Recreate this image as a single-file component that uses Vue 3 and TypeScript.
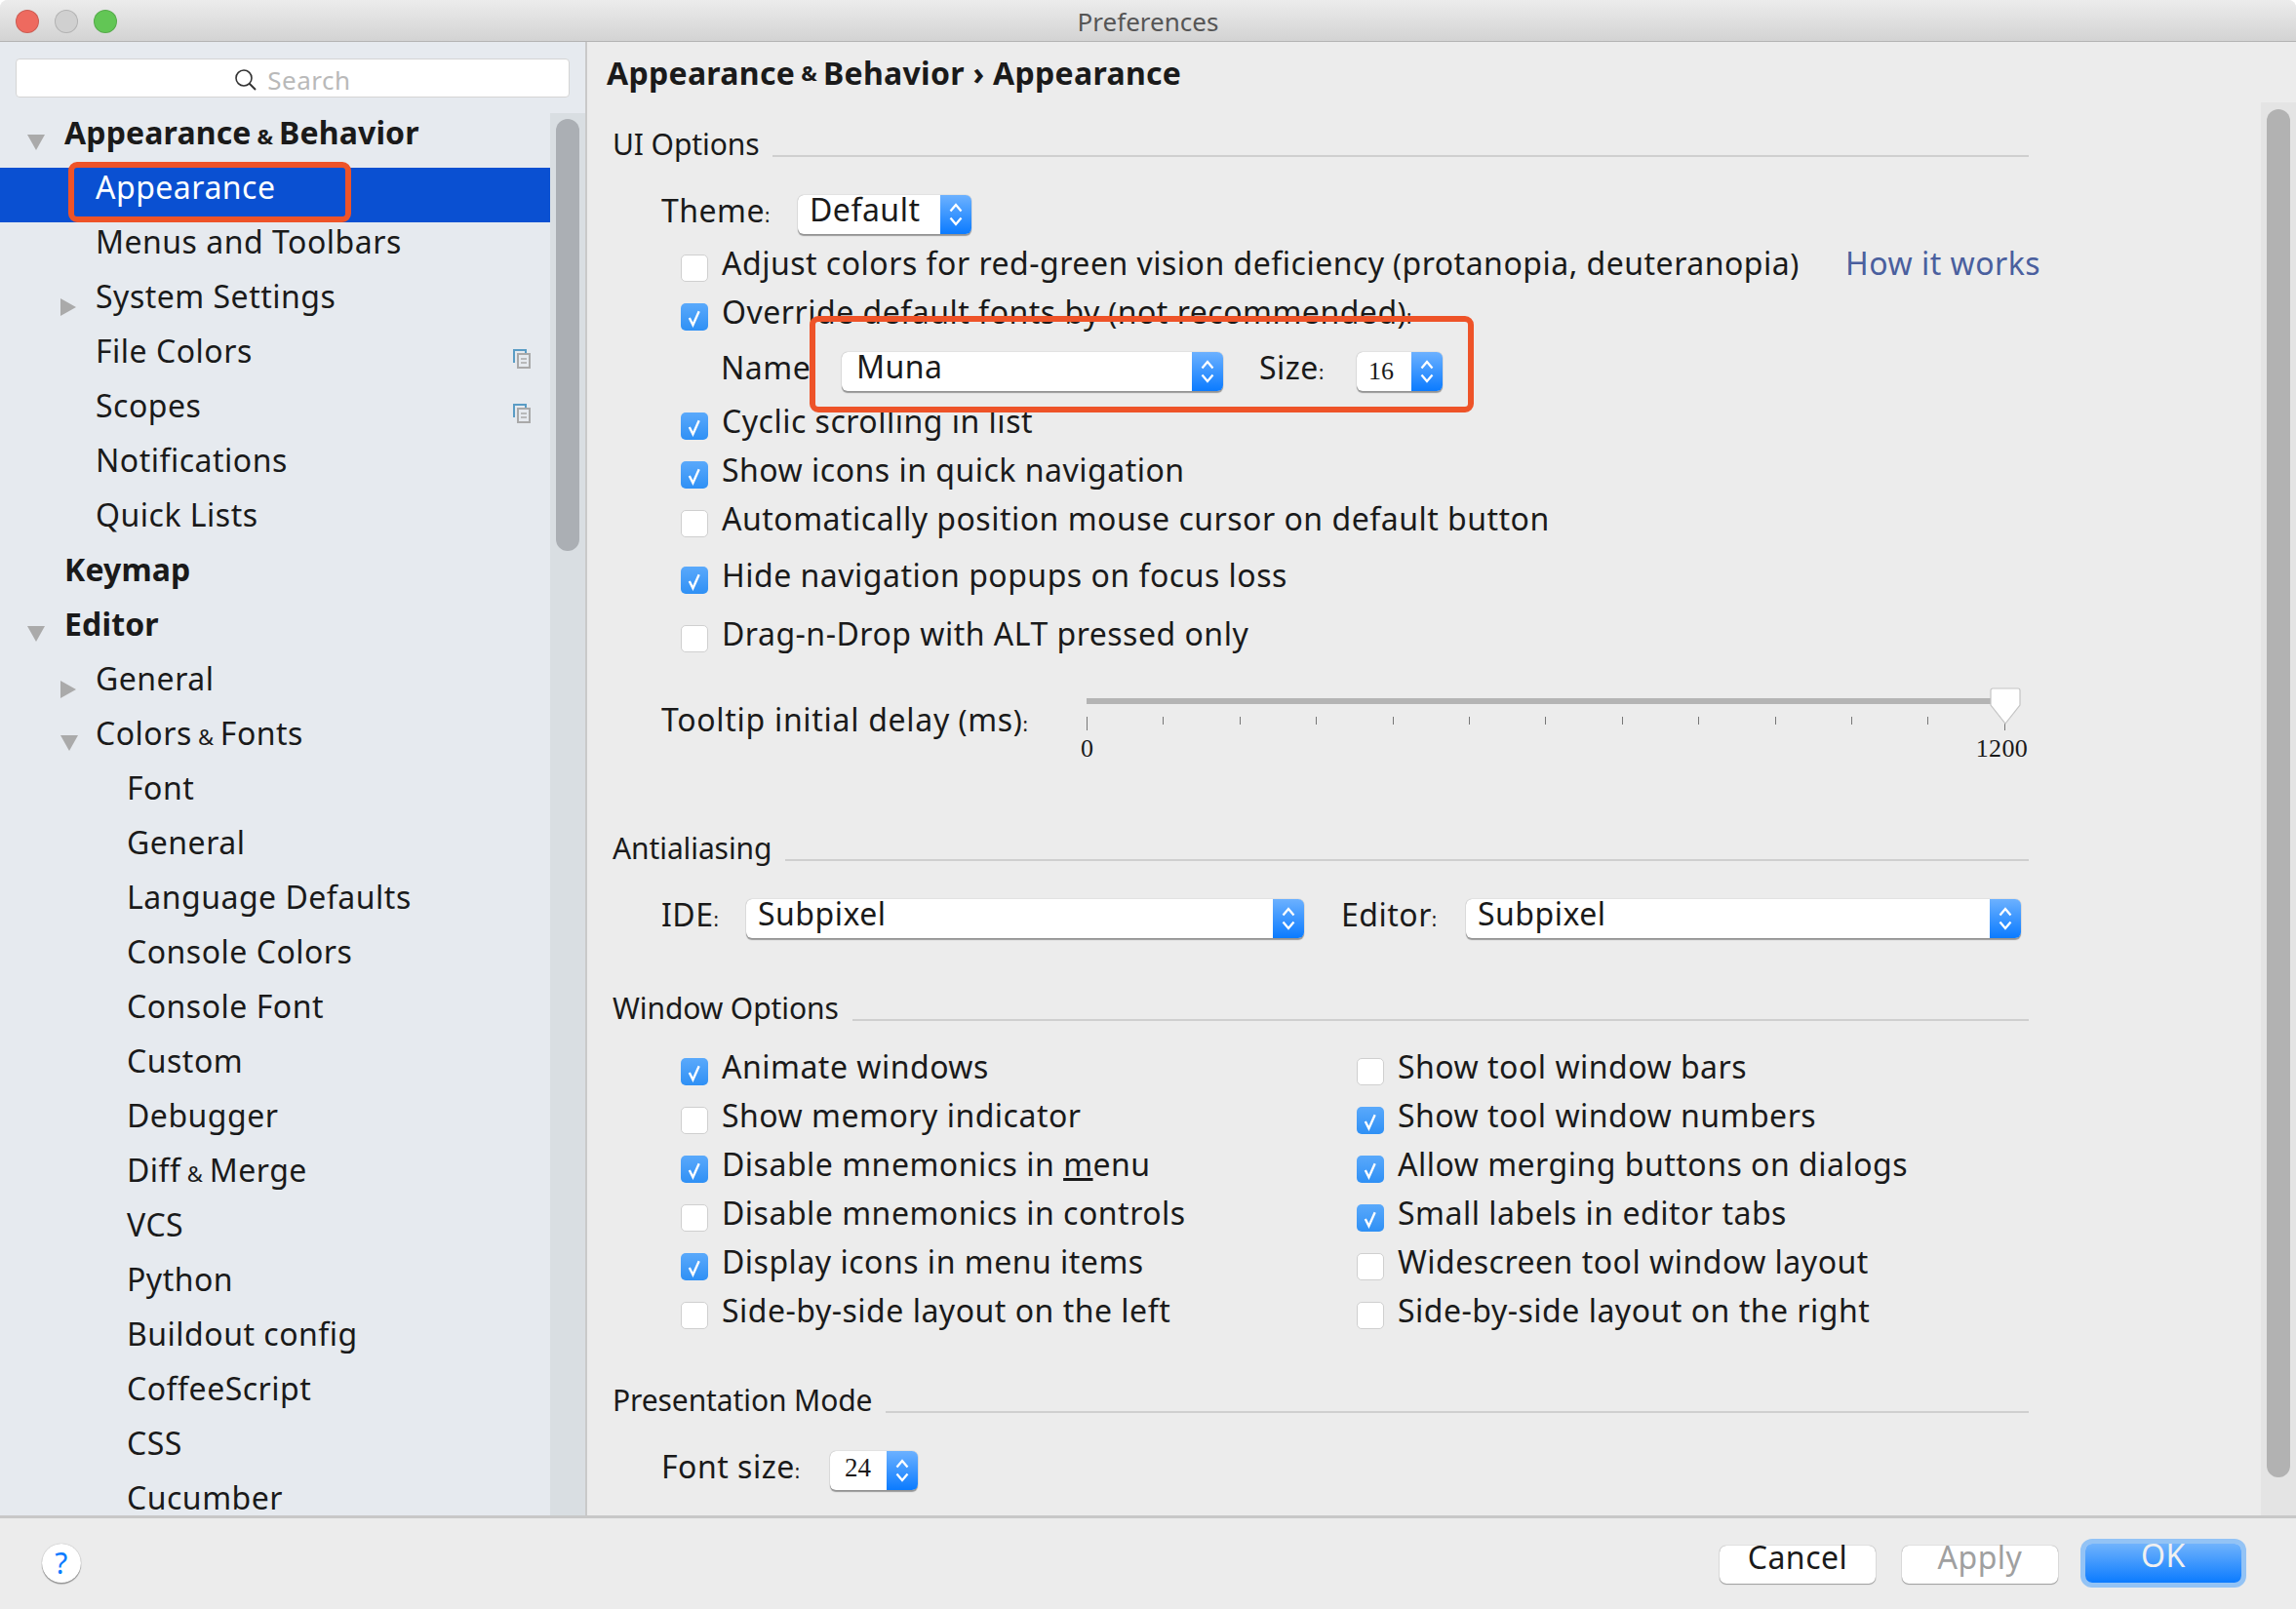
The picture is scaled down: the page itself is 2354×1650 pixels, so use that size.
<script setup lang="ts">
interface TreeItem {
  label: string;
  level: number;
  bold?: boolean;
  arrow?: "down" | "right";
  selected?: boolean;
  copy?: boolean;
  amp?: [string, string];
}

const tree: TreeItem[] = [
  { label: "", amp: ["Appearance", "Behavior"], level: 0, bold: true, arrow: "down" },
  { label: "Appearance", level: 1, selected: true },
  { label: "Menus and Toolbars", level: 1 },
  { label: "System Settings", level: 1, arrow: "right" },
  { label: "File Colors", level: 1, copy: true },
  { label: "Scopes", level: 1, copy: true },
  { label: "Notifications", level: 1 },
  { label: "Quick Lists", level: 1 },
  { label: "Keymap", level: 0, bold: true },
  { label: "Editor", level: 0, bold: true, arrow: "down" },
  { label: "General", level: 1, arrow: "right" },
  { label: "", amp: ["Colors", "Fonts"], level: 1, arrow: "down" },
  { label: "Font", level: 2 },
  { label: "General", level: 2 },
  { label: "Language Defaults", level: 2 },
  { label: "Console Colors", level: 2 },
  { label: "Console Font", level: 2 },
  { label: "Custom", level: 2 },
  { label: "Debugger", level: 2 },
  { label: "", amp: ["Diff", "Merge"], level: 2 },
  { label: "VCS", level: 2 },
  { label: "Python", level: 2 },
  { label: "Buildout config", level: 2 },
  { label: "CoffeeScript", level: 2 },
  { label: "CSS", level: 2 },
  { label: "Cucumber", level: 2 },
];

const windowLeft = [
  { label: "Animate windows", on: true },
  { label: "Show memory indicator", on: false },
  { label: "Disable mnemonics in ", under: "m", rest: "enu", on: true },
  { label: "Disable mnemonics in controls", on: false },
  { label: "Display icons in menu items", on: true },
  { label: "Side-by-side layout on the left", on: false },
];

const windowRight = [
  { label: "Show tool window bars", on: false },
  { label: "Show tool window numbers", on: true },
  { label: "Allow merging buttons on dialogs", on: true },
  { label: "Small labels in editor tabs", on: true },
  { label: "Widescreen tool window layout", on: false },
  { label: "Side-by-side layout on the right", on: false },
];

const windowOptions = windowLeft.flatMap((item, i) => [item, windowRight[i]]);

const ticks = Array.from({ length: 13 }, (_, i) => i);
</script>

<template>
  <div class="window">
    <svg class="defs" width="0" height="0">
      <symbol id="chev" viewBox="0 0 16 26">
        <path d="M2.500 9.500 8 3l5.500 6.500M2.500 16.500 8 23l5.500-6.500" fill="none" stroke="#fff" stroke-width="2.300" />
      </symbol>
      <symbol id="tick" viewBox="0 0 27 27">
        <path d="M8.500 14.500 12 21.500 18 8" fill="none" stroke="#fff" stroke-width="2.300" />
      </symbol>
    </svg>

    <header class="titlebar">
      <div class="lights">
        <span class="light red"></span>
        <span class="light grey"></span>
        <span class="light green"></span>
      </div>
      <span class="title">Preferences</span>
    </header>

    <div class="body">
      <aside class="sidebar">
        <div class="search">
          <svg class="search-icon" width="24" height="24" viewBox="0 0 24 24">
            <circle cx="10" cy="10" r="8" fill="none" stroke="#333" stroke-width="1.600" />
            <path d="M15.500 15.500 22 22" stroke="#333" stroke-width="2" />
          </svg>
          <span>Search</span>
        </div>
        <div class="tree-wrap">
          <ul class="tree">
            <li
              v-for="(item, i) in tree"
              :key="i"
              class="node"
              :class="['lvl' + item.level, { bold: item.bold, selected: item.selected }]"
            >
              <svg v-if="item.arrow === 'down'" class="arrow" width="18" height="16" viewBox="0 0 18 16">
                <path d="M0 0h18L9 16z" fill="#aaa" />
              </svg>
              <svg v-else-if="item.arrow === 'right'" class="arrow" width="16" height="18" viewBox="0 0 16 18">
                <path d="M0 0l16 9L0 18z" fill="#aaa" />
              </svg>
              <span v-if="item.amp">{{ item.amp[0] }}<span class="amp"> &amp; </span>{{ item.amp[1] }}</span>
              <span v-else>{{ item.label }}</span>
              <svg v-if="item.copy" class="copy" width="18" height="20" viewBox="0 0 18 20">
                <path d="M1 14V1h12v3" fill="none" stroke="#5a9cc5" stroke-width="2" />
                <rect x="5" y="5" width="12" height="14" fill="#e6eaef" stroke="#a9a9a9" stroke-width="2" />
                <path d="M8 10h6M8 14h6" stroke="#a9a9a9" stroke-width="1.500" />
              </svg>
            </li>
          </ul>
          <div class="side-track"><div class="side-thumb"></div></div>
        </div>
        <div class="mark mark-side"></div>
      </aside>

      <main class="main">
        <div class="crumb">Appearance<span class="amp"> &amp; </span>Behavior<span class="sep"> › </span>Appearance</div>
        <div class="scroller">
          <div class="content">
            <div class="section-title first"><span>UI Options</span><i></i></div>

            <div class="row theme-row">
              <span class="label theme-label">Theme<span class="colon">:</span></span>
              <div class="select theme-select"><span class="value">Default</span><span class="cap"><svg><use href="#chev" /></svg></span></div>
            </div>

            <div class="check">
              <span class="box"></span>
              <span>Adjust colors for red-green vision deficiency<span class="paren"> (</span>protanopia, deuteranopia<span class="paren">)</span></span>
              <a class="link">How it works</a>
            </div>
            <div class="check">
              <span class="box on"><svg><use href="#tick" /></svg></span>
              <span>Override default fonts by<span class="paren"> (</span>not recommended<span class="paren">)</span><span class="colon">:</span></span>
            </div>
            <div class="row name-row">
              <span class="name-label">Name<span class="colon">:</span></span>
              <div class="select name-select"><span class="value">Muna</span><span class="cap"><svg><use href="#chev" /></svg></span></div>
              <span class="size-label">Size<span class="colon">:</span></span>
              <div class="select num size-select"><span class="value">16</span><span class="cap"><svg><use href="#chev" /></svg></span></div>
            </div>
            <div class="check"><span class="box on"><svg><use href="#tick" /></svg></span><span>Cyclic scrolling in list</span></div>
            <div class="check"><span class="box on"><svg><use href="#tick" /></svg></span><span>Show icons in quick navigation</span></div>
            <div class="check"><span class="box"></span><span>Automatically position mouse cursor on default button</span></div>
            <div class="check hide-row"><span class="box on"><svg><use href="#tick" /></svg></span><span>Hide navigation popups on focus loss</span></div>
            <div class="check drag-row"><span class="box"></span><span>Drag-n-Drop with ALT pressed only</span></div>

            <div class="slider-row">
              <span class="slider-label">Tooltip initial delay<span class="paren"> (</span>ms<span class="paren">)</span><span class="colon">:</span></span>
              <div class="slider">
                <div class="track"></div>
                <div class="ticks">
                  <span v-for="t in ticks" :key="t" class="tick" :class="{ major: t === 0 || t === 12 }"></span>
                </div>
                <div class="scale"><span>0</span><span>1200</span></div>
                <svg class="thumb" width="32" height="38" viewBox="0 0 32 38">
                  <path d="M3 1h26a2 2 0 0 1 2 2v15L16 37 1 18V3a2 2 0 0 1 2-2z" fill="#fff" stroke="#c4c4c4" stroke-width="1.200" />
                </svg>
              </div>
            </div>

            <div class="section-title anti"><span>Antialiasing</span><i></i></div>
            <div class="row aa-row">
              <span class="label ide">IDE<span class="colon">:</span></span>
              <div class="select ide-select"><span class="value">Subpixel</span><span class="cap"><svg><use href="#chev" /></svg></span></div>
              <span class="editor-label">Editor<span class="colon">:</span></span>
              <div class="select editor-select"><span class="value">Subpixel</span><span class="cap"><svg><use href="#chev" /></svg></span></div>
            </div>

            <div class="section-title win"><span>Window Options</span><i></i></div>
            <div class="win-grid">
              <div v-for="opt in windowOptions" :key="opt.label" class="check">
                <span class="box" :class="{ on: opt.on }"><svg v-if="opt.on"><use href="#tick" /></svg></span>
                <span>{{ opt.label }}<template v-if="'under' in opt"><u>{{ opt.under }}</u>{{ opt.rest }}</template></span>
              </div>
            </div>

            <div class="section-title pres"><span>Presentation Mode</span><i></i></div>
            <div class="row font-row">
              <span class="label font-label">Font size<span class="colon">:</span></span>
              <div class="select num font-select"><span class="value">24</span><span class="cap"><svg><use href="#chev" /></svg></span></div>
            </div>
          </div>
          <div class="main-track"><div class="main-thumb"></div></div>
        </div>
        <div class="mark mark-main"></div>
      </main>
    </div>

    <footer class="footer">
      <button class="help">?</button>
      <div class="actions">
        <button class="btn">Cancel</button>
        <button class="btn disabled">Apply</button>
        <button class="btn ok">OK</button>
      </div>
    </footer>
  </div>
</template>

<style>
html,
body {
  margin: 0;
  background: #fff;
}
</style>

<style scoped>
.window {
  width: 2354px;
  height: 1650px;
  display: flex;
  flex-direction: column;
  overflow: hidden;
  background: #ececec;
  color: #1a1a1a;
  font-family: "Noto Sans", "Open Sans", sans-serif;
  font-size: 32px;
  letter-spacing: 0.5px;
  border-radius: 8px 8px 0 0;
}
.defs {
  position: absolute;
}
.titlebar {
  height: 43px;
  flex: none;
  display: flex;
  align-items: center;
  justify-content: center;
  position: relative;
  box-sizing: border-box;
  background: linear-gradient(#ececec, #d3d3d3);
  border-bottom: 1px solid #b4b4b4;
}
.lights {
  position: absolute;
  left: 16px;
  top: 10px;
  display: flex;
  gap: 16px;
}
.light {
  width: 24px;
  height: 24px;
  border-radius: 50%;
  box-sizing: border-box;
  border: 1px solid rgba(0, 0, 0, 0.14);
}
.red { background: #ee6a5f; }
.grey { background: #d0d0d0; }
.green { background: #62c655; }
.title {
  font-size: 26px;
  letter-spacing: 0;
  line-height: 36px;
  padding-top: 2px;
  color: #555;
}
.body {
  flex: 1;
  min-height: 0;
  display: flex;
}
.sidebar {
  width: 602px;
  flex: none;
  position: relative;
  display: flex;
  flex-direction: column;
  box-sizing: border-box;
  background: #e6eaef;
  border-right: 2px solid #c9c9c9;
}
.search {
  margin: 17px 16px 16px;
  height: 40px;
  flex: none;
  box-sizing: border-box;
  padding-top: 3px;
  display: flex;
  align-items: center;
  justify-content: center;
  gap: 10px;
  background: #fff;
  border: 1px solid #d4d4d4;
  border-radius: 4px;
  color: #b9b9b9;
  font-size: 26px;
  line-height: 34px;
}
.search-icon {
  flex: none;
}
.tree-wrap {
  flex: 1;
  min-height: 0;
  display: flex;
}
.tree {
  flex: 1;
  margin: 0;
  padding: 0;
  list-style: none;
}
.node {
  height: 56px;
  box-sizing: border-box;
  padding-bottom: 17px;
  line-height: 38px;
  display: flex;
  align-items: center;
  position: relative;
  white-space: nowrap;
}
.node:last-child {
  height: 39px;
  padding-bottom: 0;
}
.lvl0 { padding-left: 66px; }
.lvl1 { padding-left: 98px; }
.lvl2 { padding-left: 130px; }
.bold {
  font-weight: 700;
  letter-spacing: 0.15px;
}
.selected {
  background: #0a50d2;
  color: #fff;
}
.arrow {
  position: absolute;
  top: 22px;
}
.lvl0 .arrow { left: 28px; }
.lvl1 .arrow { left: 62px; }
.copy {
  position: absolute;
  left: 526px;
  top: 18px;
}
.amp {
  font-size: 22px;
  line-height: 0;
}
.side-track {
  width: 36px;
  flex: none;
  background: #d9dee2;
  padding: 6px 6px 0;
  box-sizing: border-box;
}
.side-thumb {
  height: 443px;
  background: #abafb4;
  border-radius: 12px;
}
.mark {
  position: absolute;
  box-sizing: border-box;
  border: 6px solid #ee5328;
  border-radius: 9px;
}
.mark-side {
  left: 70px;
  top: 123px;
  width: 290px;
  height: 62px;
}
.main {
  flex: 1;
  min-width: 0;
  position: relative;
  display: flex;
  flex-direction: column;
}
.crumb {
  height: 62px;
  flex: none;
  box-sizing: border-box;
  padding: 0 0 0 20px;
  font-weight: 700;
  letter-spacing: 0.3px;
  display: flex;
  align-items: center;
  white-space: pre;
}
.scroller {
  flex: 1;
  min-height: 0;
  display: flex;
}
.content {
  flex: 1;
  min-width: 0;
  padding: 0 238px 0 26px;
}
.main-track {
  width: 36px;
  flex: none;
  box-sizing: border-box;
  padding: 7px 6px 0;
  background: #e4e4e4;
}
.main-thumb {
  height: 1403px;
  background: #b2b2b2;
  border-radius: 12px;
}
.section-title {
  height: 40px;
  display: flex;
  gap: 14px;
  align-items: center;
  font-size: 30px;
  letter-spacing: -0.1px;
}
.section-title i {
  flex: 1;
  height: 2px;
  align-self: flex-end;
  margin-bottom: 6px;
  background: #cfcfcf;
}
.first { margin-top: 22px; }
.anti { margin-top: 64px; }
.win { margin-top: 51px; }
.pres { margin-top: 45px; }
.row {
  display: flex;
  position: relative;
}
.theme-row {
  margin-top: 33px;
  height: 40px;
  padding-left: 50px;
}
.label,
.name-label,
.size-label,
.editor-label {
  line-height: 31px;
  white-space: nowrap;
  flex: none;
}
.theme-label {
  width: 140px;
}
.colon {
  font-size: 20px;
}
.paren {
  font-size: 30px;
}
.select {
  height: 40px;
  flex: none;
  box-sizing: border-box;
  display: flex;
  justify-content: space-between;
  background: #fff;
  border-radius: 6px;
  box-shadow: 0 0 1px rgba(0, 0, 0, 0.4), 0 1.5px 1px rgba(0, 0, 0, 0.35);
}
.value {
  padding-left: 12px;
  line-height: 29px;
}
.num .value {
  font-family: "Liberation Serif", serif;
  font-size: 26px;
  letter-spacing: 0;
  line-height: 40px;
}
.name-select .value {
  padding-left: 15px;
}
.font-select .value {
  padding-left: 15px;
  font-size: 27px;
  line-height: 34px;
}
.cap {
  width: 32px;
  flex: none;
  display: flex;
  align-items: center;
  justify-content: center;
  border-radius: 0 6px 6px 0;
  background: linear-gradient(#6cb1ff, #0b7bff);
}
.cap svg {
  width: 16px;
  height: 26px;
}
.theme-select {
  width: 178px;
}
.check {
  height: 50px;
  display: flex;
  align-items: center;
  padding-left: 70px;
  white-space: nowrap;
}
.check > span:nth-child(2) {
  margin-left: 14px;
  margin-bottom: 3px;
}
.theme-row + .check {
  margin-top: 6px;
  position: relative;
}
.box {
  width: 28px;
  height: 28px;
  flex: none;
  margin-top: 7px;
  box-sizing: border-box;
  background: #fff;
  border: 1px solid #cfcfcf;
  border-radius: 5px;
}
.box.on {
  background: linear-gradient(#5aa9fb, #2f90f5);
  border: none;
}
.box svg {
  display: block;
  width: 28px;
  height: 28px;
}
.link {
  position: absolute;
  left: 1264px;
  margin-bottom: 3px;
  color: #4a5f9e;
}
.name-row {
  height: 62px;
  padding-left: 111px;
  padding-top: 15px;
  box-sizing: border-box;
}
.name-label {
  width: 124px;
}
.name-select {
  width: 391px;
}
.size-label {
  margin-left: 37px;
  width: 100px;
}
.size-select {
  width: 88px;
}
.hide-row {
  margin-top: 8px;
}
.drag-row {
  margin-top: 10px;
}
.slider-row {
  display: flex;
  margin-top: 29px;
  padding-left: 50px;
  height: 80px;
}
.slider-label {
  width: 436px;
  flex: none;
  padding-top: 11px;
  letter-spacing: 0.7px;
  white-space: nowrap;
}
.slider {
  width: 957px;
  flex: none;
  position: relative;
}
.track {
  width: 930px;
  height: 6px;
  margin-top: 11px;
  background: #b4b4b4;
}
.ticks {
  width: 942px;
  margin-top: 13px;
  display: flex;
  justify-content: space-between;
  height: 14px;
}
.tick {
  width: 1px;
  height: 8px;
  background: #777;
}
.tick.major {
  height: 14px;
}
.scale {
  width: 971px;
  margin: 4px 0 0 -6px;
  display: flex;
  justify-content: space-between;
  font-family: "Liberation Serif", serif;
  font-size: 26px;
  letter-spacing: 0.3px;
  line-height: 30px;
}
.thumb {
  position: absolute;
  left: 926px;
  top: 0;
}
.aa-row {
  margin-top: 33px;
  height: 40px;
}
.ide {
  margin-left: 50px;
  width: 87px;
}
.ide-select {
  width: 572px;
}
.editor-label {
  margin-left: 38px;
  width: 128px;
}
.editor-select {
  width: 569px;
}
.win-grid {
  margin-top: 17px;
  display: grid;
  grid-template-columns: 693px 1fr;
}
.font-row {
  margin-top: 33px;
  height: 40px;
  padding-left: 50px;
}
.font-label {
  width: 173px;
}
.font-select {
  width: 90px;
}
.mark-main {
  left: 228px;
  top: 281px;
  width: 681px;
  height: 99px;
}
.footer {
  height: 96px;
  flex: none;
  box-sizing: border-box;
  border-top: 3px solid #c8c8c8;
  display: flex;
  align-items: flex-start;
  justify-content: space-between;
  padding: 25px 56px 0 43px;
}
button {
  font: inherit;
  letter-spacing: inherit;
  padding: 0;
  border: none;
}
.help {
  width: 40px;
  height: 40px;
  margin-top: 1px;
  border-radius: 50%;
  background: #fff;
  color: #0b7bff;
  font-size: 30px;
  line-height: 38px;
  box-shadow: 0 0 1px rgba(0, 0, 0, 0.4), 0 1.5px 1px rgba(0, 0, 0, 0.35);
}
.actions {
  display: flex;
  align-items: flex-start;
  gap: 27px;
  margin-top: 3px;
}
.btn {
  width: 160px;
  height: 39px;
  padding-bottom: 15px;
  line-height: 24px;
  background: #fff;
  color: #1a1a1a;
  border-radius: 7px;
  box-shadow: 0 0 1px rgba(0, 0, 0, 0.5), 0 1px 1px rgba(0, 0, 0, 0.3);
}
.disabled {
  color: #a0a0a0;
}
.ok {
  margin-left: 1px;
  height: 40px;
  margin-top: -2px;
  padding-bottom: 16px;
  color: #f0f0f0;
  background: linear-gradient(#70b3fc, #0b7bff);
  box-shadow: 0 0 0 5px #93c3f5;
}
</style>
